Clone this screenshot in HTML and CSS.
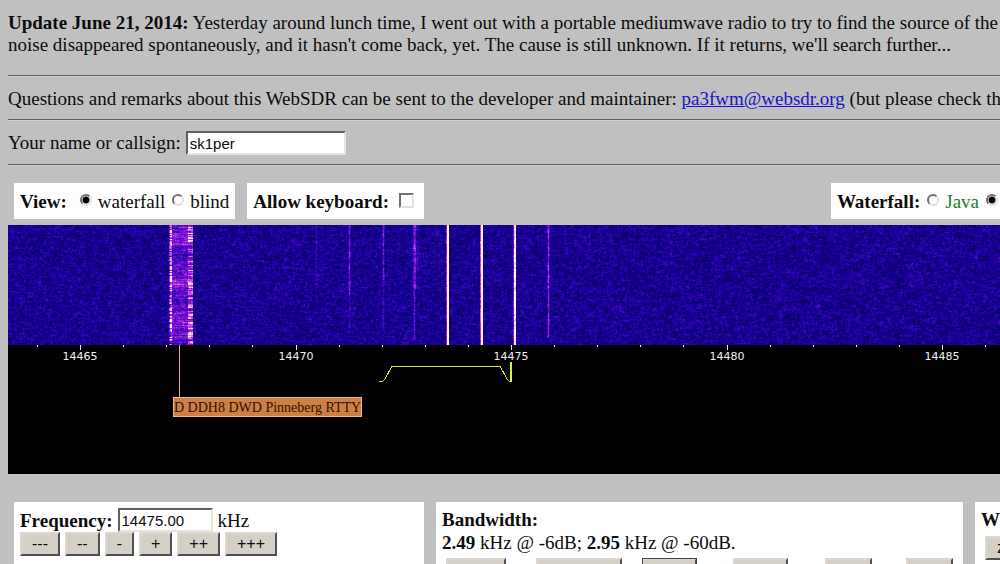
FILE: index.html
```html
<!DOCTYPE html>
<html lang="en">
<head>
<meta charset="utf-8">
<title>WebSDR</title>
<link rel="stylesheet" href="styles.css">
</head>
<body>
<p class="news"><b>Update June 21, 2014:</b> Yesterday around lunch time, I went out with a portable mediumwave radio to try to find the source of the<br>noise disappeared spontaneously, and it hasn't come back, yet. The cause is still unknown. If it returns, we'll search further...</p>
<hr>
<p class="contact">Questions and remarks about this WebSDR can be sent to the developer and maintainer: <a href="mailto:pa3fwm@websdr.org">pa3fwm@websdr.org</a> (but please check the</p>
<hr>
<form class="callsign">
  <label for="name">Your name or callsign:</label>
  <input class="field field-name" id="name" type="text" value="sk1per">
</form>
<hr>

<div class="toolbar">
  <div class="box" role="radiogroup" aria-labelledby="view-title">
    <b id="view-title" class="view-title">View:</b>
    <label class="choice"><input type="radio" name="view" checked>waterfall</label>
    <label class="choice"><input type="radio" name="view">blind</label>
  </div>
  <div class="box">
    <label class="keyboard"><b>Allow keyboard:</b><input type="checkbox"></label>
  </div>
  <div class="box box-end" role="radiogroup" aria-labelledby="engine-title">
    <b id="engine-title">Waterfall:</b>
    <label class="choice java"><input type="radio" name="engine">Java</label>
    <label class="choice"><input type="radio" name="engine" aria-label="HTML5" checked></label>
  </div>
</div>

<div class="receiver">
  <canvas class="waterfall" id="waterfall" height="120"></canvas>
  <svg class="scale" height="129" aria-label="Frequency scale">
    <g id="ticks" class="ticks"></g>
    <rect class="station-line" x="171" y="0" width="1" height="52"/>
    <path class="passband" d="M371 36H375L377 34L384 21H492L499 34L501 36H503"/>
    <path class="carrier" d="M503 17V37"/>
  </svg>
  <span class="station">D DDH8 DWD Pinneberg RTTY</span>
</div>

<div class="panels">
  <section class="panel">
    <div class="frequency">
      <label for="freq"><b>Frequency:</b></label>
      <input class="field field-freq" id="freq" type="text" value="14475.00">
      <span>kHz</span>
    </div>
    <div class="steps">
      <button type="button">---</button>
      <button type="button">--</button>
      <button type="button">-</button>
      <button type="button">+</button>
      <button type="button">++</button>
      <button type="button">+++</button>
    </div>
  </section>
  <section class="panel">
    <b>Bandwidth:</b>
    <div><b>2.49</b> kHz @ -6dB; <b>2.95</b> kHz @ -60dB.</div>
    <div class="modes">
      <button class="mode-m" type="button" aria-label="CW"></button>
      <button class="mode-l" type="button" aria-label="LSB"></button>
      <button class="mode-s selected" type="button" aria-label="USB"></button>
      <button class="mode-s" type="button" aria-label="AM"></button>
      <button class="mode-xs" type="button" aria-label="AM sync"></button>
      <button class="mode-xs" type="button" aria-label="FM"></button>
    </div>
  </section>
  <section class="panel">
    <b>W</b>
    <div class="zoom"><button type="button">z</button></div>
  </section>
</div>
<script src="waterfall.js"></script>
</body>
</html>
```
FILE: styles.css
```css
* { box-sizing: border-box; }

html { height: 100%; overflow: hidden; }

body {
  display: flex;
  flex-direction: column;
  margin: 0;
  padding: 12px 0 0 8px;
  height: 100%;
  overflow: hidden;
  background: #c0c0c0;
  color: #0c0c0c;
  font: 19px/22px "Liberation Serif", "Times New Roman", serif;
}

p { margin: 0; white-space: nowrap; overflow: hidden; }
.news { margin-bottom: 19px; }
.contact { padding: 11px 0 9px; }
a { color: #1a12d0; }

hr {
  flex: none;
  width: 100%;
  margin: 0;
  border: 0;
  border-top: 1px solid #606060;
  border-bottom: 1px solid #d0d0d0;
}

.callsign {
  display: flex;
  align-items: center;
  gap: 5px;
  padding: 10px 0 9px;
}

.field {
  height: 24px;
  padding: 0 2px;
  border: 2px solid;
  border-color: #606060 #e4e4e4 #e4e4e4 #606060;
  border-radius: 0;
  background: #fff;
  color: #0c0c0c;
  font: 15px "Liberation Sans", Arial, sans-serif;
}
.field-name { width: 160px; }
.field-freq { width: 95px; }

.toolbar {
  display: flex;
  gap: 12px;
  padding: 17px 0 6px 6px;
}
.box {
  display: flex;
  align-items: center;
  gap: 7px;
  height: 36px;
  padding: 2px 6px 0;
  background: #fff;
  white-space: nowrap;
}
.box-end { margin-left: auto; padding-right: 2px; }
.view-title { margin-right: 6px; }
.choice { display: flex; align-items: center; gap: 6px; }
.java { color: #208028; }
.keyboard { display: flex; align-items: center; gap: 10px; padding-right: 4px; }

input[type="radio"], input[type="checkbox"] {
  appearance: none;
  flex: none;
  margin: 0 0 4px;
  width: 12px;
  height: 12px;
  border: 2px solid;
  border-color: #707070 #e0e0e0 #e0e0e0 #707070;
  background: #fff;
}
input[type="radio"] { border-radius: 50%; }
input[type="radio"]:checked {
  background: radial-gradient(circle, #000 0 3px, #fff 4px);
}
input[type="checkbox"] { width: 15px; height: 15px; }

.receiver {
  position: relative;
  flex: none;
  background: #000;
}
.waterfall { display: block; width: 100%; height: 120px; background: #14008c; }
.scale { display: block; width: 100%; overflow: hidden; }
.ticks {
  fill: #f0f0f0;
  font: 11px "DejaVu Sans", Verdana, sans-serif;
  text-anchor: middle;
}
.station-line { fill: #e0b090; }
.passband { fill: none; stroke: #d8e048; shape-rendering: crispEdges; }
.carrier { stroke: #d8f040; stroke-width: 2; }
.station {
  position: absolute;
  left: 165px;
  top: 172px;
  height: 20px;
  border: 1px solid #f0b880;
  background: #cc8044;
  color: #301000;
  font-size: 14px;
  line-height: 19px;
  white-space: nowrap;
}

.panels {
  flex: 1;
  min-height: 0;
  display: grid;
  grid-template-columns: minmax(0, 410fr) minmax(0, 527fr) minmax(0, 25fr);
  grid-template-rows: minmax(0, 1fr);
  gap: 12px;
  padding: 28px 0 0 6px;
}
.panel {
  padding: 6px 6px 0;
  background: #fff;
  overflow: hidden;
  line-height: 23px;
}
.frequency { display: flex; align-items: center; gap: 5px; }
.steps { display: flex; gap: 5px; }

button {
  height: 24px;
  padding: 0 10px;
  border: 2px solid;
  border-color: #dcd8d0 #505050 #505050 #dcd8d0;
  border-radius: 0;
  background: #d4d0c8;
  color: #0c0c0c;
  font: 16px/16px "Liberation Sans", Arial, sans-serif;
}
.modes {
  display: grid;
  grid-template-columns: 90fr 107fr 91fr 92fr 82fr 51fr;
  padding: 4px 0 0 4px;
}
.mode-m { width: 60px; }
.mode-l { width: 86px; }
.mode-s { width: 55px; }
.mode-xs { width: 47px; }
.selected { outline: 1px solid #404040; outline-offset: -1px; }
.zoom { padding: 4px 0 0 4px; }
```
FILE: waterfall.js
```js
const canvas = document.getElementById('waterfall');
const ctx = canvas.getContext('2d');

let seed = 14475;
function rnd() {
  seed = (seed * 1664525 + 1013904223) >>> 0;
  return seed / 4294967296;
}

// Signal level to colour: black, blue, violet, magenta, pale yellow.
const stops = [
  [0, 0, 0, 55], [0.25, 18, 0, 138], [0.4, 46, 4, 180],
  [0.6, 130, 18, 212], [0.8, 214, 75, 238], [1, 255, 246, 218]
];
function colour(v) {
  v = Math.max(0, Math.min(1, v));
  let i = 1;
  while (stops[i][0] < v) i++;
  const a = stops[i - 1], b = stops[i];
  const t = (v - a[0]) / (b[0] - a[0]);
  return [1, 2, 3].map(k => a[k] + (b[k] - a[k]) * t);
}

// Carriers: x, half width, level, lowest row reached.
const carriers = [
  [308, 1, 0.14, 75], [341, 1, 0.2, 70], [341, 1, 0.13, 110],
  [375, 1, 0.15, 55], [375, 1, 0.15, 105], [406, 1, 0.26, 115],
  [407, 3, 0.22, 65], [439, 1, 0.95, 120], [473, 1, 1.1, 120],
  [506, 1, 0.75, 120], [540, 1, 0.38, 113], [581, 1, 0.1, 26]
];

function drawWaterfall() {
  const w = canvas.width = canvas.clientWidth;
  const h = canvas.height;
  const image = ctx.createImageData(w, h);
  const above = new Float32Array(w);
  for (let y = 0; y < h; y++) {
    let prev = 0;
    const mark = rnd() < 0.4;
    const burst = 0.16 + rnd() * 0.18 + 0.08 * Math.sin(y / 7);
    for (let x = 0; x < w; x++) {
      prev = prev * 0.5 + (rnd() - 0.5) * 0.24;
      above[x] = above[x] * 0.4 + prev * 0.8;
      let v = 0.27 + above[x] + (rnd() > 0.99 ? 0.1 : 0);
      if (x > 161 && x < 185) v += burst;
      if (x >= 161 && x <= 163) v += mark ? 0.1 : 0.42;
      if (x >= 180 && x <= 184) v += mark ? 0.34 : 0.1;
      for (const c of carriers) {
        if (Math.abs(x - c[0]) <= c[1] && y < c[3]) {
          const near = x === c[0] || (c[2] > 0.7 && x === c[0] + 1);
          v += c[2] * (near ? 1 : 0.4);
        }
      }
      const rgb = colour(v);
      const p = (y * w + x) * 4;
      image.data[p] = rgb[0];
      image.data[p + 1] = rgb[1];
      image.data[p + 2] = rgb[2];
      image.data[p + 3] = 255;
    }
  }
  ctx.putImageData(image, 0, 0);
}

function drawScale() {
  const ticks = document.getElementById('ticks');
  const add = (name, attrs, text) => {
    const el = document.createElementNS('http://www.w3.org/2000/svg', name);
    for (const key in attrs) el.setAttribute(key, attrs[key]);
    if (text) el.textContent = text;
    ticks.appendChild(el);
  };
  ticks.replaceChildren();
  for (let khz = 14464; ; khz++) {
    const x = Math.round(72 + (khz - 14465) * 43.1);
    if (x > canvas.clientWidth) break;
    const major = khz % 5 === 0;
    add('rect', { x: x, y: 0, width: 1, height: major ? 5 : 2 });
    if (major) add('text', { x: x, y: 15 }, String(khz));
  }
}

function draw() {
  drawWaterfall();
  drawScale();
}
draw();
window.addEventListener('resize', draw);
```
